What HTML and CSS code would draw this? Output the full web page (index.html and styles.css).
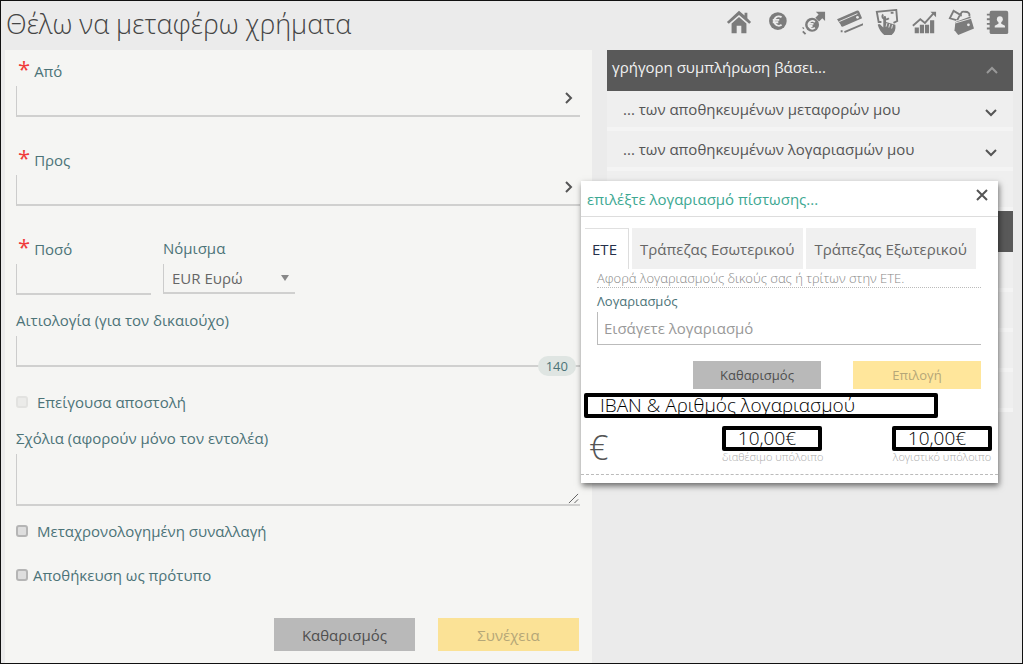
FILE: index.html
```
<!DOCTYPE html>
<html lang="el">
<head>
<meta charset="utf-8">
<title>Θέλω να μεταφέρω χρήματα</title>
<link rel="stylesheet" href="styles.css">
</head>
<body>
<div class="page">
  <header class="topbar">
    <h1 class="title">Θέλω να μεταφέρω χρήματα</h1>
    <nav class="tools" aria-label="Συντομεύσεις">
      <a href="#" aria-label="Αρχική"><svg viewBox="0 0 28 28"><path d="M14 2 1 14l2 2L14 6.500 25 16l2-2-4-4V4h-3v3z"/><path d="M14 8.500 6 15.500V26h5.500v-8h5v8H22V15.500z"/></svg></a>
      <a href="#" aria-label="Λογαριασμοί"><svg viewBox="0 0 28 28"><circle cx="16" cy="13" r="9.500"/><path class="cut" d="M20 9a5 5 0 1 0 0 8M10.500 11.700h7M10.500 14.300h6"/></svg></a>
      <a href="#" aria-label="Μεταφορές"><svg viewBox="0 0 28 28"><circle cx="13" cy="17" r="7.500"/><path class="cut" d="M16 14a4 4 0 1 0 0 6M8.500 16h6M8.500 18.300h5"/><path d="M17 3h10v10l-3-3-3.500 3.500-4-4L20 6z"/><path class="line" d="M3 24l3 3M4 20l-1 1"/></svg></a>
      <a href="#" aria-label="Κάρτες"><svg viewBox="0 0 28 28"><path d="M0 11 21 2q2-1 3 1l3 7-21 9q-2 0-2-2z"/><path class="cut thin" d="M2.500 13.500 22 5"/><circle class="hole" cx="22" cy="9" r="1.500"/><path class="line" d="M8 25l21-9M4 24h2"/></svg></a>
      <a href="#" aria-label="Πληρωμές"><svg viewBox="0 0 28 28"><path class="line" d="M8 14H5L3 3l21-2 1 12-4 2"/><path class="line" d="M10 6a4 3 0 0 0 6 4M18 4l3 0"/><path d="M10 8q3-1 3 1v5l10 3q1 7-4 11h-8q-5-4-7-11 2-2 4 1l2 2z"/><path class="cut thin" d="M14 15l-1 4M17 16l-1 4M20 17l-1 4"/></svg></a>
      <a href="#" aria-label="Επενδύσεις"><svg viewBox="0 0 28 28"><path d="M4 20h4.500v6H4zM9.500 17H14v9H9.500zM15 17h4.500v9H15zM20.500 12H25v14h-4.500z"/><path class="line" d="M2 18l8-7 5 4 9-10"/><path d="M21 3h6v6z"/></svg></a>
      <a href="#" aria-label="Προϊόντα"><svg viewBox="0 0 28 28"><path d="M8 14 24 8l4 13-17 7-4-5z"/><path class="cut thin" d="M8 15l17-5"/><path class="line" d="M9 12 2 10l4-8 7 4-3 6M14 8q-1-6 4-5 6 0 5 5"/><circle class="hole" cx="22" cy="17" r="1.500"/></svg></a>
      <a href="#" aria-label="Επαφές"><svg viewBox="0 0 28 28"><rect x="5" y="2" width="20" height="25" rx="2"/><path class="line" d="M2 6h5M2 11h5M2 16h5M2 21h5"/><circle class="hole" cx="16" cy="11" r="3.200"/><path class="hole" d="M14.500 13h3v3l4 2v2h-11v-2l4-2z"/></svg></a>
    </nav>
  </header>

  <main class="content">
    <form class="panel">
      <div class="field wide">
        <label class="required" for="from">Από</label>
        <div class="picker"><input class="line-input" id="from" type="text"><button type="button" class="pick" aria-label="Επιλογή λογαριασμού χρέωσης"><svg viewBox="0 0 10 12"><path d="M2 1l5 5-5 5"/></svg></button></div>
      </div>
      <div class="field wide">
        <label class="required" for="to">Προς</label>
        <div class="picker"><input class="line-input" id="to" type="text"><button type="button" class="pick" aria-label="Επιλογή λογαριασμού πίστωσης"><svg viewBox="0 0 10 12"><path d="M2 1l5 5-5 5"/></svg></button></div>
      </div>
      <div class="row">
        <div class="field amount">
          <label class="required" for="amount">Ποσό</label>
          <input class="line-input" id="amount" type="text">
        </div>
        <div class="field currency">
          <label for="currency">Νόμισμα</label>
          <select class="line-input" id="currency"><option>EUR Ευρώ</option></select>
        </div>
      </div>
      <div class="field reason">
        <label for="reason">Αιτιολογία (για τον δικαιούχο)</label>
        <input class="line-input" id="reason" type="text">
        <span class="counter">140</span>
      </div>
      <label class="check"><input type="checkbox" disabled>Επείγουσα αποστολή</label>
      <div class="field notes">
        <label for="notes">Σχόλια (αφορούν μόνο τον εντολέα)</label>
        <textarea class="line-input" id="notes"></textarea>
        <svg class="grip" viewBox="0 0 12 12"><path d="M1 11 11 1M7 11l4-4"/></svg>
      </div>
      <label class="check"><input type="checkbox">Μεταχρονολογημένη συναλλαγή</label>
      <label class="check tight"><input type="checkbox">Αποθήκευση ως πρότυπο</label>
      <div class="actions">
        <button type="reset" class="btn gray">Καθαρισμός</button>
        <button type="submit" class="btn yellow">Συνέχεια</button>
      </div>
    </form>

    <aside class="side">
      <button type="button" class="bar">γρήγορη συμπλήρωση βάσει...<svg viewBox="0 0 14 10"><path d="M2 8l5-5 5 5"/></svg></button>
      <button type="button" class="item">... των αποθηκευμένων μεταφορών μου<svg viewBox="0 0 14 10"><path d="M2 2l5 5 5-5"/></svg></button>
      <button type="button" class="item">... των αποθηκευμένων λογαριασμών μου<svg viewBox="0 0 14 10"><path d="M2 2l5 5 5-5"/></svg></button>
      <div class="item"></div>
      <div class="bar"></div>
      <div class="item"></div>
      <div class="item"></div>
      <div class="item"></div>
      <div class="item"></div>
    </aside>
  </main>

  <section class="dialog" role="dialog" aria-labelledby="dialog-title">
    <div class="dialog-head">
      <h2 id="dialog-title">επιλέξτε λογαριασμό πίστωσης...</h2>
      <button type="button" class="close" aria-label="Κλείσιμο"><svg viewBox="0 0 12 12"><path d="M1 1l10 10M11 1 1 11"/></svg></button>
    </div>
    <div class="tabs" role="tablist">
      <button type="button" role="tab" class="tab active" aria-selected="true">ΕΤΕ</button>
      <button type="button" role="tab" class="tab">Τράπεζας Εσωτερικού</button>
      <button type="button" role="tab" class="tab">Τράπεζας Εξωτερικού</button>
    </div>
    <div class="dialog-form">
      <p class="hint">Αφορά λογαριασμούς δικούς σας ή τρίτων στην ΕΤΕ.</p>
      <label for="account">Λογαριασμός</label>
      <input class="line-input" id="account" type="text" placeholder="Εισάγετε λογαριασμό">
      <div class="dialog-actions">
        <button type="button" class="btn gray">Καθαρισμός</button>
        <button type="button" class="btn yellow">Επιλογή</button>
      </div>
    </div>
    <div class="iban">IBAN &amp; Αριθμός λογαριασμού</div>
    <div class="balances">
      <span class="euro">€</span>
      <div class="balance"><div class="value">10,00€</div><div class="caption">διαθέσιμο υπόλοιπο</div></div>
      <div class="balance"><div class="value">10,00€</div><div class="caption">λογιστικό υπόλοιπο</div></div>
    </div>
  </section>
</div>
</body>
</html>
```
FILE: styles.css
```
* { box-sizing: border-box; }
body {
  margin: 0;
  background: #ebebeb;
  color: #555;
  font: 15px/20px "Open Sans", "Noto Sans", sans-serif;
}
button, input, select, textarea { font: inherit; color: inherit; margin: 0; }
button { border: 0; padding: 0; background: none; }
svg { fill: none; stroke: #555; stroke-width: 2; }

.page {
  position: relative;
  display: flex;
  flex-direction: column;
  min-height: 100vh;
  border: 1px solid #111;
}
.topbar {
  display: flex;
  justify-content: space-between;
  padding: 3px 0 0 5px;
  height: 49px;
}
.title { margin: 0; font-size: 27px; line-height: 40px; font-weight: 300; color: #444; }
.tools { display: flex; gap: 11px; padding: 5px 11px 0 0; }
.tools a { display: block; width: 26px; height: 26px; }
.tools svg { display: block; width: 26px; height: 26px; fill: #7c7c7c; stroke: none; }
.tools .cut { fill: none; stroke: #ebebeb; stroke-width: 2; }
.tools .thin { stroke-width: 1; }
.tools .line { fill: none; stroke: #7c7c7c; stroke-width: 2; }
.tools .hole { fill: #ebebeb; }

.content {
  display: grid;
  grid-template-columns: 587fr 406fr;
  gap: 15px;
  flex: 1;
  padding: 0 9px 0 4px;
}
.panel { background: #f5f5f3; padding: 10px 12px 11px 11px; color: #4c7378; }
.field { position: relative; display: flex; flex-direction: column; gap: 6px; }
.wide { margin-bottom: 32px; }
.required::before {
  content: "*";
  color: #f03a3a;
  font-size: 22px;
  line-height: 16px;
  padding: 0 4px 0 2px;
}
.required { height: 20px; line-height: 20px; }
.line-input {
  display: block;
  width: 100%;
  height: 31px;
  padding: 0 6px;
  border: 0;
  border-left: 1px solid #ccc;
  border-bottom: 2px solid #d0d0cf;
  border-radius: 0;
  background: transparent;
  outline: 0;
}
.picker { position: relative; }
.pick { position: absolute; right: 4px; top: 5px; width: 12px; height: 14px; }
.pick svg { display: block; width: 10px; height: 14px; }
.row { display: flex; gap: 12px; margin-bottom: 15px; }
.amount { width: 135px; }
.currency { width: 132px; }
.currency select {
  height: 30px;
  padding: 0 8px;
  color: #666;
  appearance: none;
}
.currency::after {
  content: "";
  position: absolute;
  right: 6px;
  bottom: 14px;
  border: 4px solid transparent;
  border-top: 6px solid #888;
  border-bottom: 0;
}
.reason { margin-bottom: 25px; }
.counter {
  position: absolute;
  right: 4px;
  bottom: -9px;
  padding: 0 8px;
  border-radius: 10px;
  background: #dfe5e2;
  font-size: 13px;
}
.check { display: flex; align-items: center; gap: 9px; margin-bottom: 16px; }
.check.tight { gap: 5px; margin: 24px 0 33px; }
.check input {
  appearance: none;
  width: 12px;
  height: 12px;
  border: 2px solid #b5b5b5;
  border-radius: 3px;
  background: #dedede;
}
.check input:disabled { border-color: #e2e2e0; background: #ebebe9; }
.notes { margin-bottom: 15px; }
.notes textarea { height: 52px; resize: none; }
.grip { position: absolute; right: 1px; bottom: 2px; width: 11px; height: 11px; stroke-width: 1; }
.actions { display: flex; justify-content: flex-end; gap: 23px; padding-right: 1px; }
.btn { width: 141px; height: 33px; }
.gray { background: #b9b9b9; color: #4f4f4f; }
.yellow { background: #fbe296; color: #b5a778; }

.side { display: flex; flex-direction: column; }
.bar, .item {
  display: flex;
  justify-content: space-between;
  width: 100%;
  text-align: left;
}
.bar { height: 41px; padding: 7px 14px 0 5px; background: #595959; color: #f2f2f2; }
.bar svg { width: 14px; height: 10px; margin-top: 8px; stroke: #999; }
.item { height: 40px; padding: 8px 15px 0 16px; background: #efefef; border-bottom: 4px solid #f4f4f4; }
.item svg { width: 14px; height: 10px; margin-top: 9px; }

.dialog {
  position: absolute;
  left: 580px;
  top: 180px;
  width: 417px;
  padding-bottom: 8px;
  background: #fff;
  box-shadow: 1px 3px 6px rgba(0, 0, 0, .55);
}
.dialog-head {
  display: flex;
  justify-content: space-between;
  height: 36px;
  padding: 8px 10px 0 6px;
  border-bottom: 1px solid #ddd;
}
.dialog-head h2 { margin: 0; font-size: 15px; line-height: 20px; font-weight: 400; color: #3da892; }
.close { width: 12px; height: 12px; }
.close svg { display: block; width: 12px; height: 12px; }
.tabs { display: flex; gap: 3px; height: 41px; margin: 11px 22px 0 4px; }
.tab { flex: 1 1 170px; background: #f0f0f0; color: #666; }
.tab.active {
  flex: 0 0 44px;
  padding-right: 4px;
  background: #fff;
  border-top: 1px solid #e0e0e0;
  border-right: 1px solid #ddd;
  color: #25304a;
}
.dialog-form { padding: 0 17px 0 16px; font-size: 13px; color: #4c7378; }
.hint { margin: 0 0 3px; line-height: 18px; border-bottom: 1px dotted #bbb; color: #888; font-weight: 300; }
.dialog-form label { display: block; margin-bottom: 1px; }
.dialog-form .line-input { height: 33px; font-size: 15px; border-bottom-width: 1px; border-color: #bbb; }
.line-input::placeholder { color: #999; }
.dialog-actions { display: flex; justify-content: flex-end; gap: 32px; margin-top: 16px; }
.dialog-actions .btn { width: 128px; height: 28px; }
.dialog-actions .yellow { background: #ffe69b; }
.iban, .value { border: 4px solid #000; border-radius: 2px; background: #fff; color: #000; font: 300 19px/17px "Open Sans", sans-serif; }
.iban { width: 354px; margin: 4px 0 0 3px; padding-left: 12px; }
.value { padding-right: 10px; }
.balances {
  display: flex;
  justify-content: space-between;
  height: 57px;
  padding: 8px 6px 0 8px;
  border-bottom: 1px dashed #bbb;
}
.euro { flex: 1; font-size: 34px; line-height: 42px; font-weight: 300; }
.balance { width: 100px; margin-left: 70px; text-align: center; }
.caption { font-size: 11px; line-height: 12px; color: #aaa; font-weight: 300; white-space: nowrap; }
```
